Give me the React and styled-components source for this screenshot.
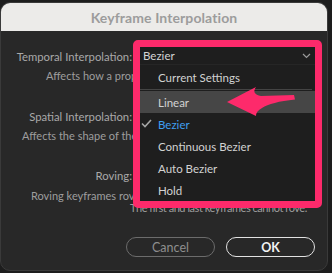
import React from "react";
import styled, { createGlobalStyle } from "styled-components";

const GlobalStyle = createGlobalStyle`
  html, body {
    margin: 0;
    padding: 0;
    background: #1d1d1d;
  }
  body {
    font-family: "Lato", "Liberation Sans", sans-serif;
    overflow: hidden;
  }
`;

const Page = styled.div`
  width: 332px;
  height: 273px;
  padding-top: 2px;
  box-sizing: border-box;
`;

const Window = styled.div`
  position: relative;
  width: 328px;
  height: 269px;
  box-sizing: border-box;
  border: 1px solid #3a3a3a;
  border-radius: 10px;
  background: #282828;
  overflow: hidden;
  display: flex;
  flex-direction: column;
`;

const TitleBar = styled.div`
  height: 28px;
  flex-shrink: 0;
  background: #ecebe9;
  display: flex;
  align-items: center;
  justify-content: center;
  font-size: 14px;
  font-weight: 700;
  color: #9c9c9c;
  letter-spacing: 0.1px;
`;

const Body = styled.div`
  flex: 1;
  display: flex;
  flex-direction: column;
  padding: 16px 12px 13px 0;
`;

const Section = styled.div`
  display: flex;
  flex-direction: column;
  gap: ${(p) => p.gap || 5}px;
  margin-bottom: ${(p) => p.after || 0}px;
`;

const Row = styled.div`
  display: grid;
  grid-template-columns: 131px 1fr;
  column-gap: 9px;
  align-items: center;
  height: 18px;
`;

const Label = styled.span`
  text-align: right;
  font-size: 11.3px;
  color: #a9a9a9;
  white-space: nowrap;
`;

const SelectBox = styled.div`
  height: 18px;
  background: #1f1f1f;
  border-radius: 3px;
`;

const Note = styled.div`
  font-size: 11px;
  line-height: 12px;
  color: #9e9e9e;
  white-space: nowrap;
  padding-left: ${(p) => p.indent}px;
  letter-spacing: ${(p) => p.tracking || 0}px;
`;

const Footer = styled.div`
  margin-top: auto;
  display: flex;
  justify-content: flex-end;
  gap: 11px;
`;

const Button = styled.button`
  width: 89px;
  height: 20px;
  box-sizing: border-box;
  border-radius: 10px;
  background: transparent;
  border: 1.5px solid ${(p) => (p.primary ? "#e2e2e2" : "#6c6c6c")};
  color: ${(p) => (p.primary ? "#f2f2f2" : "#8e8e8e")};
  font-family: inherit;
  font-size: 12.5px;
  font-weight: ${(p) => (p.primary ? 700 : 400)};
  padding: 0;
`;

const Callout = styled.div`
  position: absolute;
  left: 132px;
  top: 37px;
  width: 189px;
  height: 168px;
  box-sizing: border-box;
  border: 7px solid #fd2a6b;
  border-radius: 5px;
  background: #1e1e1e;
  display: flex;
  flex-direction: column;
`;

const Current = styled.div`
  height: 17px;
  flex-shrink: 0;
  display: flex;
  align-items: center;
  justify-content: space-between;
  padding: 0 4px 0 3px;
  font-size: 11.5px;
  color: #d4d4d4;
  border-bottom: 1px solid #262626;
`;

const Menu = styled.div`
  display: flex;
  flex-direction: column;
`;

const Item = styled.div`
  height: ${(p) => p.h || 22}px;
  flex-shrink: 0;
  display: flex;
  align-items: center;
  padding-left: 18px;
  position: relative;
  font-size: 11.5px;
  color: ${(p) => (p.checked ? "#3f9ff0" : "#d2d2d2")};
  background: ${(p) => (p.active ? "#464646" : "transparent")};
`;

const Check = styled.svg`
  position: absolute;
  left: 1px;
  top: 6px;
`;

const Separator = styled.div`
  height: 1px;
  margin: 0 3px 1px 0;
  background: #444;
`;

const Arrow = styled.svg`
  position: absolute;
  left: 0;
  top: 0;
  pointer-events: none;
`;

export default function App() {
  return (
    <Page>
      <GlobalStyle />
      <Window>
        <TitleBar>Keyframe Interpolation</TitleBar>
        <Body>
          <Section after={25}>
            <Row>
              <Label>Temporal Interpolation:</Label>
              <SelectBox />
            </Row>
            <Note indent={45}>Affects how a property changes over time.</Note>
          </Section>
          <Section after={24}>
            <Row>
              <Label>Spatial Interpolation:</Label>
              <SelectBox />
            </Row>
            <Note indent={21}>Affects the shape of the path.</Note>
          </Section>
          <Section gap={6}>
            <Row>
              <Label>Roving:</Label>
              <SelectBox />
            </Row>
            <div>
              <Note indent={30}>Roving keyframes rove in time.</Note>
              <Note indent={129} tracking={-0.45}>The first and last keyframes cannot rove.</Note>
            </div>
          </Section>
          <Footer>
            <Button>Cancel</Button>
            <Button primary>OK</Button>
          </Footer>
        </Body>

        <Callout>
          <Current>
            <span>Bezier</span>
            <svg width="9" height="6" viewBox="0 0 9 6">
              <path d="M1 1 L4.5 4.5 L8 1" fill="none" stroke="#9a9a9a" strokeWidth="1.2" />
            </svg>
          </Current>
          <Menu>
            <Item h={24}>Current Settings</Item>
            <Separator />
            <Item active>Linear</Item>
            <Item checked>
              <Check width="11" height="9" viewBox="0 0 11 9">
                <path d="M1 4.5 L4 7.5 L10 1" fill="none" stroke="#a5a5a5" strokeWidth="1.6" />
              </Check>
              Bezier
            </Item>
            <Item>Continuous Bezier</Item>
            <Item>Auto Bezier</Item>
            <Item>Hold</Item>
          </Menu>
        </Callout>

        <Arrow width="328" height="269" viewBox="1 3 328 269">
          <path
            d="M227 102 L256 87 Q251 94 261 96 L294 95 L295 99.5 Q271 102 262 108 Q256 111 256 116 Z"
            fill="#fd2a6b"
          />
        </Arrow>
      </Window>
    </Page>
  );
}
